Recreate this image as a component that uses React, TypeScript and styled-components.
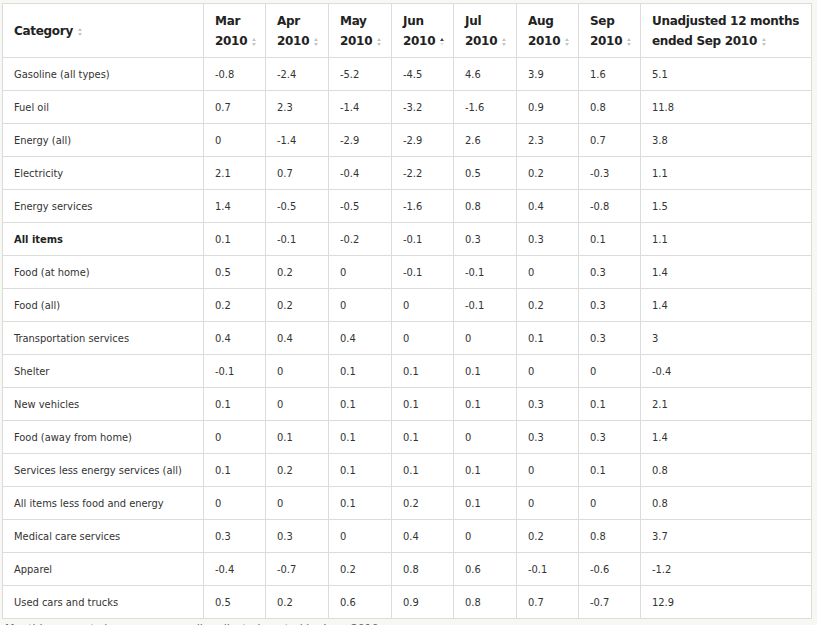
import React from 'react';
import styled, { createGlobalStyle } from 'styled-components';

const GlobalStyle = createGlobalStyle`
  html, body {
    margin: 0;
    padding: 0;
    background: #f7f7f3;
  }
`;

const Page = styled.div`
  padding: 3px 0 0 2px;
  font-family: 'DejaVu Sans', 'Liberation Sans', sans-serif;
`;

const Table = styled.table`
  width: 809px;
  border-collapse: collapse;
  table-layout: fixed;
  background: #fff;
  border: 1px solid #d6d6d6;
`;

const HeadCell = styled.th`
  height: 53px;
  padding: 0 4px 0 11px;
  border: 1px solid #dcdcdc;
  text-align: left;
  vertical-align: middle;
  font-size: 12px;
  font-weight: bold;
  letter-spacing: -0.3px;
  line-height: 20px;
  color: #222;
  white-space: nowrap;
  overflow: visible;
`;

const Row = styled.tr`
  height: 33px;
`;

const Cell = styled.td<{ $strong?: boolean }>`
  padding: 0 8px 0 11px;
  border: 1px solid #dcdcdc;
  font-size: 11px;
  font-stretch: condensed;
  font-weight: ${(p) => (p.$strong ? 'bold' : 'normal')};
  color: ${(p) => (p.$strong ? '#222' : '#333')};
  white-space: nowrap;
`;

const Sort = styled.svg`
  display: inline-block;
  margin-left: 5px;
  vertical-align: -1px;
`;

const Caption = styled.div`
  margin-top: 3px;
  padding-left: 3px;
  font-size: 11px;
  color: #666;
`;

function SortIcon({ active }: { active?: boolean }) {
  return (
    <Sort width="4" height="8" viewBox="0 0 4 8">
      <path d="M2 0 L4 3 L0 3 Z" fill={active ? '#444' : '#c4c4c4'} />
      <path d="M0 5 L4 5 L2 8 Z" fill={active ? '#e4e4e4' : '#c4c4c4'} />
    </Sort>
  );
}

const columns: { top: string; bottom: string; width: number; active?: boolean }[] = [
  { top: 'Mar', bottom: '2010', width: 62 },
  { top: 'Apr', bottom: '2010', width: 63 },
  { top: 'May', bottom: '2010', width: 63 },
  { top: 'Jun', bottom: '2010', width: 62, active: true },
  { top: 'Jul', bottom: '2010', width: 63 },
  { top: 'Aug', bottom: '2010', width: 62 },
  { top: 'Sep', bottom: '2010', width: 62 },
  { top: 'Unadjusted 12 months', bottom: 'ended Sep 2010', width: 171 },
];

const rows: { name: string; values: string[]; strong?: boolean }[] = [
  { name: 'Gasoline (all types)', values: ['-0.8', '-2.4', '-5.2', '-4.5', '4.6', '3.9', '1.6', '5.1'] },
  { name: 'Fuel oil', values: ['0.7', '2.3', '-1.4', '-3.2', '-1.6', '0.9', '0.8', '11.8'] },
  { name: 'Energy (all)', values: ['0', '-1.4', '-2.9', '-2.9', '2.6', '2.3', '0.7', '3.8'] },
  { name: 'Electricity', values: ['2.1', '0.7', '-0.4', '-2.2', '0.5', '0.2', '-0.3', '1.1'] },
  { name: 'Energy services', values: ['1.4', '-0.5', '-0.5', '-1.6', '0.8', '0.4', '-0.8', '1.5'] },
  { name: 'All items', strong: true, values: ['0.1', '-0.1', '-0.2', '-0.1', '0.3', '0.3', '0.1', '1.1'] },
  { name: 'Food (at home)', values: ['0.5', '0.2', '0', '-0.1', '-0.1', '0', '0.3', '1.4'] },
  { name: 'Food (all)', values: ['0.2', '0.2', '0', '0', '-0.1', '0.2', '0.3', '1.4'] },
  { name: 'Transportation services', values: ['0.4', '0.4', '0.4', '0', '0', '0.1', '0.3', '3'] },
  { name: 'Shelter', values: ['-0.1', '0', '0.1', '0.1', '0.1', '0', '0', '-0.4'] },
  { name: 'New vehicles', values: ['0.1', '0', '0.1', '0.1', '0.1', '0.3', '0.1', '2.1'] },
  { name: 'Food (away from home)', values: ['0', '0.1', '0.1', '0.1', '0', '0.3', '0.3', '1.4'] },
  { name: 'Services less energy services (all)', values: ['0.1', '0.2', '0.1', '0.1', '0.1', '0', '0.1', '0.8'] },
  { name: 'All items less food and energy', values: ['0', '0', '0.1', '0.2', '0.1', '0', '0', '0.8'] },
  { name: 'Medical care services', values: ['0.3', '0.3', '0', '0.4', '0', '0.2', '0.8', '3.7'] },
  { name: 'Apparel', values: ['-0.4', '-0.7', '0.2', '0.8', '0.6', '-0.1', '-0.6', '-1.2'] },
  { name: 'Used cars and trucks', values: ['0.5', '0.2', '0.6', '0.9', '0.8', '0.7', '-0.7', '12.9'] },
];

export default function App() {
  return (
    <Page>
      <GlobalStyle />
      <Table>
        <colgroup>
          <col style={{ width: 201 }} />
          {columns.map((c, i) => (
            <col key={i} style={{ width: c.width }} />
          ))}
        </colgroup>
        <thead>
          <tr>
            <HeadCell>
              Category
              <SortIcon />
            </HeadCell>
            {columns.map((c, i) => (
              <HeadCell key={i}>
                {c.top}
                <br />
                {c.bottom}
                <SortIcon active={c.active} />
              </HeadCell>
            ))}
          </tr>
        </thead>
        <tbody>
          {rows.map((r, i) => (
            <Row key={i}>
              <Cell $strong={r.strong}>{r.name}</Cell>
              {r.values.map((v, j) => (
                <Cell key={j}>{v}</Cell>
              ))}
            </Row>
          ))}
        </tbody>
      </Table>
      <Caption>Monthly percent changes, seasonally adjusted; sorted by June 2010.</Caption>
    </Page>
  );
}
